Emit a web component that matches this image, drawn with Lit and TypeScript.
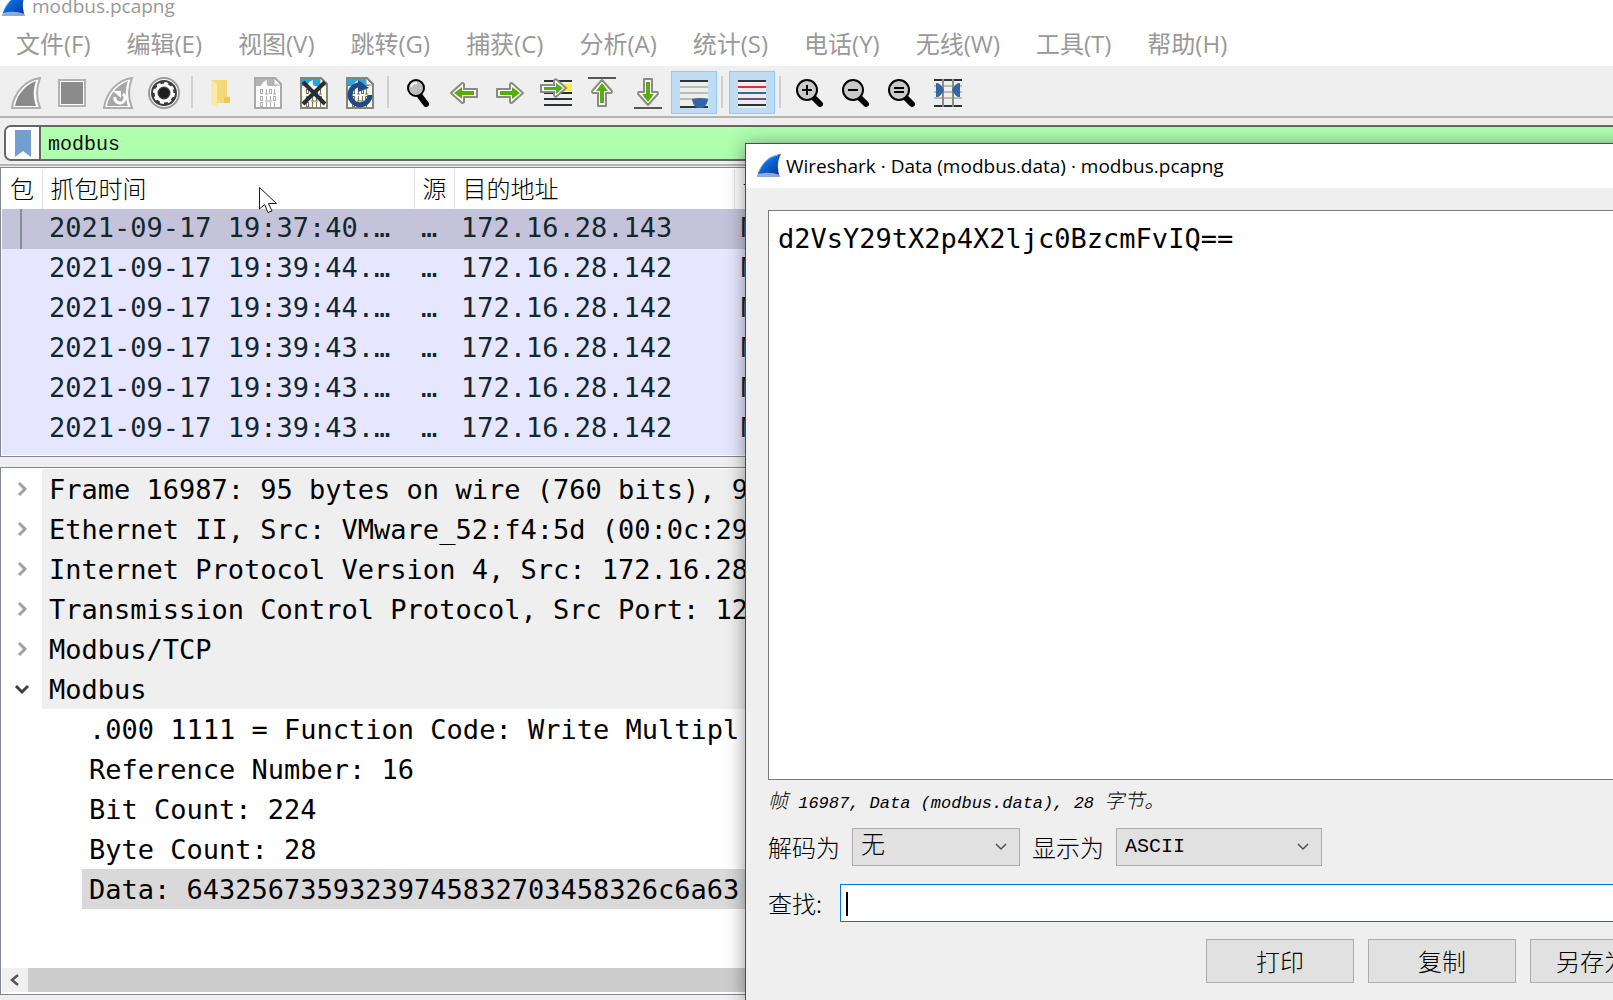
import { LitElement, html, svg, css } from "lit";
import { customElement, state } from "lit/decorators.js";
import { classMap } from "lit/directives/class-map.js";

const fin = (id: string) => svg`
  <defs>
    <linearGradient id=${id} x1="0" y1="0" x2="1" y2="1">
      <stop offset="0" stop-color="#2f9bf5"></stop>
      <stop offset=".5" stop-color="#0a5fd0"></stop>
      <stop offset="1" stop-color="#062f8c"></stop>
    </linearGradient>
  </defs>
  <path d="M0 23C3 11 11 1 24 0C20 7 20 16 23 23Z" fill="url(#${id})"></path>
  <path d="M1 20Q12 17 23 21V23H0Z" fill="#b9cbe8" opacity=".75"></path>
  <path d="M2 17C6 8 12 3 21 1" fill="none" stroke="#7cc4fb" stroke-width="1"></path>`;

const finOutline = svg`
  <path d="M2 31C4 16 15 3 30 1C26 11 26 21 30 31Z" fill="#fff" stroke="#adadad" stroke-width="2"></path>`;

const sheet = (top: string, edge: string, ink: string, paper: string) => svg`
  <path d="M3 1H23L29 7V31H3Z" fill=${paper} stroke=${edge} stroke-width="2"></path>
  <path d="M4 2H22L25 5V9H4Z" fill=${top}></path>
  <path d="M9 9C10 6 12 4 15 3C14 6 15 8 16 9Z" fill="#fff"></path>
  <path d="M22 1V8H29Z" fill="#fff" stroke=${edge}></path>
  <g fill="none" stroke=${ink} stroke-width="1">
    <rect x="8.500" y="12.500" width="2" height="4"></rect><path d="M14.500 12V17M22.500 12V17M13 17H16M21 17H24"></path><rect x="17.500" y="12.500" width="2" height="4"></rect>
    <rect x="8.500" y="19.500" width="2" height="4"></rect><path d="M14.500 19V24M18.500 19V24M13 24H20"></path><rect x="21.500" y="19.500" width="2" height="4"></rect>
    <rect x="8.500" y="25.500" width="2" height="4"></rect><path d="M14.500 25V30M18.500 25V30M22.500 25V30"></path>
  </g>`;

const lens = (mark: unknown) => svg`
  <path d="M19 20L26 27" stroke="#000" stroke-width="6" stroke-linecap="round"></path>
  <circle cx="13" cy="13" r="10" fill="#c9c9c9" stroke="#000" stroke-width="2"></circle>
  <g stroke="#000" stroke-width="2">${mark}</g>`;

const arrow = (turn: number) => svg`
  <g transform="rotate(${turn} 16 16)">
    <path d="M3 12H16V7Q17 5 19 7L29 16L19 25Q17 27 16 25V20H3Z" fill="#fff" stroke="#8b8b85" stroke-width="2" stroke-linejoin="round"></path>
    <path d="M6 14H18V10L26 16L18 22V18H6Z" fill="#58ad0c"></path>
  </g>`;

const icons: Record<string, unknown> = {
  start: svg`${finOutline}<path d="M5 29C7 18 15 8 26 4C23 12 23 21 26 29Z" fill="#8b8b8b"></path>`,
  stop: svg`<rect x="3" y="3" width="26" height="26" fill="#fff" stroke="#b3b3b3" stroke-width="2"></rect><rect x="5" y="5" width="22" height="22" fill="#8c8c8c"></rect>`,
  restart: svg`${finOutline}<path d="M5 29C7 18 15 8 26 4C23 12 23 21 26 29Z" fill="#a8a8a8"></path>
    <path d="M13 20A5 5 0 1 0 21 17" fill="none" stroke="#fff" stroke-width="3"></path><path d="M11 14H19V21Z" fill="#fff"></path>`,
  options: svg`<circle cx="16" cy="16" r="15" fill="#fff" stroke="#9b9b9b" stroke-width="2"></circle><circle cx="16" cy="16" r="13" fill="#3b3b3b"></circle>
    <circle cx="16" cy="16" r="8" fill="none" stroke="#fff" stroke-width="3"></circle>
    <circle cx="16" cy="16" r="10" fill="none" stroke="#fff" stroke-width="2" stroke-dasharray="4 3.85"></circle><circle cx="16" cy="16" r="5" fill="#1c1c1c"></circle>`,
  open: svg`<path d="M5 3H21V19L24 20V26H8Z" fill="#f7d878"></path><path d="M5 3L11 7V30L5 27Z" fill="#fde9a5"></path><path d="M18 20H24V26H18Z" fill="#efc55a"></path>`,
  save: sheet("#b5b5b5", "#a9a9a9", "#b0b0b0", "#fcfcfc"),
  close: svg`${sheet("#2ba5e0", "#85857b", "#77776c", "#fffde8")}<path d="M5 5L27 27M27 5L5 27" stroke="#262f33" stroke-width="4"></path>`,
  reload: svg`${sheet("#2ba5e0", "#85857b", "#77776c", "#fffde8")}<path d="M18 8A10 10 0 1 0 26 18" fill="none" stroke="#204a87" stroke-width="5"></path><path d="M14 3L25 11L14 15Z" fill="#204a87"></path>`,
  find: svg`<path d="M18 19L24 27" stroke="#000" stroke-width="6" stroke-linecap="round"></path>
    <circle cx="14" cy="11" r="8" fill="#bdbdbd" stroke="#000" stroke-width="2"></circle><path d="M9 10Q10 6 15 6" fill="none" stroke="#fff" stroke-width="2"></path>`,
  back: arrow(180),
  forward: arrow(0),
  goto: svg`<path d="M4 4H32M4 16H32M4 22H32M4 28H32" stroke="#2e3436" stroke-width="2"></path><path d="M20 7H32V14H20Z" fill="#fce94f"></path>
    <path d="M1 8H14V4Q15 1 17 3L26 11L17 19Q15 21 14 18V15H1Z" fill="#fff" stroke="#8b8b85" stroke-width="2"></path><path d="M4 10H16V6L23 11L16 17V13H4Z" fill="#58ad0c"></path>`,
  first: svg`<path d="M2 1H30" stroke="#555753" stroke-width="2"></path>${arrow(270)}`,
  last: svg`<path d="M2 31H30" stroke="#555753" stroke-width="2"></path><g transform="translate(0 -1)">${arrow(90)}</g>`,
  autoscroll: svg`<rect x="2" y="3" width="28" height="28" fill="#eeeeec"></rect><path d="M2 4H30M2 30H30" stroke="#2e3436" stroke-width="2"></path>
    <path d="M2 10H30M2 16H30M2 22H30" stroke="#babdb6" stroke-width="2"></path><path d="M14 22Q22 20 30 22Q30 27 25 31H19Q14 27 14 22Z" fill="#3465a4"></path>`,
  colorize: svg`<rect x="2" y="3" width="28" height="28" fill="#eeeeec"></rect><path d="M2 4H30M2 28H30" stroke="#2e3436" stroke-width="2"></path>
    <path d="M2 10H30" stroke="#ef2929" stroke-width="2"></path><path d="M2 16H30" stroke="#3465a4" stroke-width="2"></path><path d="M2 22H30" stroke="#75507b" stroke-width="2"></path>`,
  zoomin: lens(svg`<path d="M8 13H18M13 8V18"></path>`),
  zoomout: lens(svg`<path d="M8 13H18"></path>`),
  zoomreset: lens(svg`<path d="M8 11H18M8 15H18"></path>`),
  resize: svg`<path d="M2 9H30M2 15H30M2 21H30" stroke="#babdb6" stroke-width="2"></path><path d="M2 3H30M2 29H30" stroke="#2e3436" stroke-width="2"></path>
    <path d="M11 2V30M21 2V30" stroke="#888a85" stroke-width="2"></path><path d="M4 6Q8 5 12 13Q8 21 4 20ZM28 6Q24 5 20 13Q24 21 28 20Z" fill="#3465a4"></path>`,
};

const toolGroups: { id: string; label: string; on?: boolean }[][] = [
  [
    { id: "start", label: "开始捕获" },
    { id: "stop", label: "停止捕获" },
    { id: "restart", label: "重新开始捕获" },
    { id: "options", label: "捕获选项" },
  ],
  [
    { id: "open", label: "打开" },
    { id: "save", label: "保存" },
    { id: "close", label: "关闭" },
    { id: "reload", label: "重新加载" },
  ],
  [
    { id: "find", label: "查找分组" },
    { id: "back", label: "后退" },
    { id: "forward", label: "前进" },
    { id: "goto", label: "转到分组" },
    { id: "first", label: "第一个分组" },
    { id: "last", label: "最后一个分组" },
    { id: "autoscroll", label: "自动滚动", on: true },
  ],
  [{ id: "colorize", label: "着色", on: true }],
  [
    { id: "zoomin", label: "放大" },
    { id: "zoomout", label: "缩小" },
    { id: "zoomreset", label: "原始大小" },
    { id: "resize", label: "调整列宽" },
  ],
];

const menus = ["文件(F)", "编辑(E)", "视图(V)", "跳转(G)", "捕获(C)", "分析(A)", "统计(S)", "电话(Y)", "无线(W)", "工具(T)", "帮助(H)"];

const packets = [
  ["2021-09-17 19:37:40.…", "172.16.28.143"],
  ["2021-09-17 19:39:44.…", "172.16.28.142"],
  ["2021-09-17 19:39:44.…", "172.16.28.142"],
  ["2021-09-17 19:39:43.…", "172.16.28.142"],
  ["2021-09-17 19:39:43.…", "172.16.28.142"],
  ["2021-09-17 19:39:43.…", "172.16.28.142"],
];

const layers = [
  "Frame 16987: 95 bytes on wire (760 bits), 9",
  "Ethernet II, Src: VMware_52:f4:5d (00:0c:29",
  "Internet Protocol Version 4, Src: 172.16.28",
  "Transmission Control Protocol, Src Port: 12",
  "Modbus/TCP",
  "Modbus",
];

const fields = [
  ".000 1111 = Function Code: Write Multipl",
  "Reference Number: 16",
  "Bit Count: 224",
  "Byte Count: 28",
  "Data: 64325673593239745832703458326c6a63",
];

const shared = css`
  * { box-sizing: border-box; }
  button, input, select, textarea { font: inherit; color: inherit; margin: 0; border-radius: 0; outline: none; }
  svg { display: block; flex: none; }
`;

@customElement("ws-toolbar")
export class WsToolbar extends LitElement {
  static styles = [
    shared,
    css`
      :host { display: block; }
      .bar { display: flex; height: 48px; padding: 3px 3px 0; background: #efefef; }
      .group { display: flex; }
      .group + .group::before { content: ""; width: 2px; height: 32px; margin: 5px 6px 0 4px; background: #cfcfcf; }
      .tool { display: flex; justify-content: center; width: 46px; height: 43px; padding: 5px 0 0; border: 1px solid transparent; background: none; }
      .on { background: #c0dcf3; border-color: #90c8f6; }
    `,
  ];
  render() {
    return html`<div class="bar" role="toolbar">
      ${toolGroups.map(
        (g) => html`<div class="group">
          ${g.map(
            (t) => html`<button class=${classMap({ tool: true, on: !!t.on })} aria-label=${t.label}>
              <svg width="32" height="32" viewBox="0 0 32 32" aria-hidden="true">${icons[t.id]}</svg>
            </button>`
          )}
        </div>`
      )}
    </div>`;
  }
}

@customElement("ws-packets")
export class WsPackets extends LitElement {
  static styles = [
    shared,
    css`
      :host { display: block; height: 290px; border: 1px solid #828790; padding: 1px; overflow: hidden; background: #fff; }
      .fill { height: 100%; background: #e6e6ff; }
      .list { width: 100%; border-collapse: collapse; table-layout: fixed; }
      .no, .src { width: 40px; }
      .time { width: 372px; }
      .dst { width: 280px; }
      th { height: 40px; padding: 6px 0 0 8px; text-align: left; font: 300 24px/34px "Liberation Mono", "Noto Sans CJK SC", monospace; background: #fff; border-right: 1px solid #e2e2e2; white-space: nowrap; }
      td { height: 40px; padding: 0 0 2px 7px; font: 27px/38px "DejaVu Sans Mono", monospace; color: #12272e; white-space: nowrap; overflow: hidden; }
      .selected td { background: #c5c3d9; }
      .mark { padding: 0 0 0 18px; }
      .stem { display: block; width: 2px; height: 40px; background: #858f98; }
    `,
  ];
  render() {
    return html`<div class="fill">
      <table class="list">
        <colgroup><col class="no" /><col class="time" /><col class="src" /><col class="dst" /><col /></colgroup>
        <thead>
          <tr><th>包</th><th>抓包时间</th><th>源</th><th>目的地址</th><th>协议</th></tr>
        </thead>
        <tbody>
          ${packets.map(
            ([time, dst], i) => html`<tr class=${classMap({ selected: i === 0 })}>
              <td class="mark">${i === 0 ? html`<span class="stem"></span>` : ""}</td>
              <td>${time}</td><td>…</td><td>${dst}</td><td>Modbus/TCP</td>
            </tr>`
          )}
        </tbody>
      </table>
    </div>`;
  }
}

@customElement("ws-details")
export class WsDetails extends LitElement {
  static styles = [
    shared,
    css`
      :host { display: flex; flex-direction: column; border: 1px solid #828790; padding: 1px; overflow: hidden; background: #fff; font: 27px/39px "DejaVu Sans Mono", monospace; color: #000; }
      .tree { flex: 1; overflow: hidden; white-space: nowrap; }
      .layer { display: flex; height: 40px; }
      .toggle { display: flex; align-items: center; justify-content: center; width: 40px; padding: 0; border: 0; background: none; color: #a0a0a0; }
      .open { color: #404040; }
      .label { flex: 1; padding: 1px 0 0 7px; background: #efefef; }
      .field { height: 40px; margin-left: 80px; padding: 1px 0 0 7px; }
      .selected { background: #d9d9d9; }
      .scroll { display: flex; height: 24px; margin-bottom: 1px; background: #cdcdcd; }
      .step { display: flex; align-items: center; justify-content: center; width: 26px; padding: 0; border: 0; background: #f0f0f0; color: #555; }
    `,
  ];
  render() {
    return html`<div class="tree" role="tree">
        ${layers.map((text, i) => {
          const open = i === layers.length - 1;
          return html`<div class="layer" role="treeitem">
            <button class=${classMap({ toggle: true, open })} aria-label=${text}>
              <svg width="16" height="16" viewBox="0 0 16 16" fill="none" stroke="currentColor" stroke-width="3">
                <path d=${open ? "M2 5L8 11L14 5" : "M5 2L11 8L5 14"}></path>
              </svg>
            </button>
            <span class="label">${text}</span>
          </div>`;
        })}
        ${fields.map((text, i) => html`<div class=${classMap({ field: true, selected: i === fields.length - 1 })} role="treeitem">${text}</div>`)}
      </div>
      <div class="scroll">
        <button class="step" aria-label="向左滚动">
          <svg width="12" height="12" viewBox="0 0 12 12" fill="none" stroke="currentColor" stroke-width="2.5"><path d="M9 1L3 6L9 11"></path></svg>
        </button>
      </div>`;
  }
}

@customElement("ws-dialog")
export class WsDialog extends LitElement {
  @state() private data = "d2VsY29tX2p4X2ljc0BzcmFvIQ==";
  static styles = [
    shared,
    css`
      :host { display: flex; flex-direction: column; border: 1px solid #4c4c4c; background: #efefef; box-shadow: 0 2px 18px rgba(0, 0, 0, 0.42); font: 300 24px/36px "Liberation Mono", "Noto Sans CJK SC", monospace; color: #000; }
      .title { display: flex; align-items: center; gap: 5px; height: 44px; padding: 0 11px; background: #fff; font: 19px/42px "Open Sans", "Noto Sans", sans-serif; white-space: nowrap; }
      .body { flex: 1; display: flex; flex-direction: column; padding: 22px 22px 17px; }
      .data { flex: 1; width: 100%; padding: 10px 9px; border: 1px solid #7a7a7a; background: #fff; resize: none; font: 27px/36px "DejaVu Sans Mono", monospace; }
      .info { margin: 0; height: 48px; font: italic 300 17px/46px "Liberation Mono", "Noto Sans CJK SC", monospace; white-space: pre; }
      .han { font-size: 20px; }
      .row { display: flex; align-items: center; gap: 12px; height: 38px; white-space: nowrap; }
      .name { min-width: 60px; line-height: 34px; font-family: "Noto Sans CJK SC", sans-serif; }
      .find { margin: 18px 0 17px; }
      .pick { display: grid; grid-template-rows: 38px; width: 168px; }
      .wide { width: 206px; }
      .pick > * { grid-area: 1 / 1; }
      .pick svg { justify-self: end; align-self: center; margin-right: 12px; pointer-events: none; }
      .select { appearance: none; width: 100%; height: 38px; padding: 0 8px; border: 1px solid #adadad; background: #e1e1e1; }
      .latin { font-size: 20px; }
      .box { position: relative; flex: 1; display: flex; height: 38px; }
      .input { flex: 1; padding: 0 6px; border: 1px solid #0078d7; background: #fff; }
      .caret { position: absolute; left: 6px; top: 8px; width: 2px; height: 24px; background: #000; }
      .actions { display: flex; justify-content: flex-end; gap: 14px; }
      .action { width: 148px; height: 44px; padding: 0; border: 1px solid #adadad; background: #e1e1e1; font-family: "Noto Sans CJK SC", sans-serif; }
    `,
  ];
  private chevron() {
    return html`<svg width="14" height="14" viewBox="0 0 14 14" fill="none" stroke="#505050" stroke-width="1.5"><path d="M2 4L7 9L12 4"></path></svg>`;
  }
  render() {
    return html`<div class="title">
        <svg width="24" height="24" viewBox="0 0 24 24" aria-hidden="true">${fin("dlg")}</svg>
        <span>Wireshark · Data (modbus.data) · modbus.pcapng</span>
      </div>
      <div class="body">
        <textarea class="data" readonly aria-label="Data" .value=${this.data}></textarea>
        <p class="info"><span class="han">帧</span> 16987, Data (modbus.data), 28 <span class="han">字节。</span></p>
        <div class="row">
          <label class="name" for="decode">解码为</label>
          <span class="pick"><select id="decode" class="select"><option>无</option></select>${this.chevron()}</span>
          <label class="name" for="show">显示为</label>
          <span class="pick wide"><select id="show" class="select latin"><option>ASCII</option></select>${this.chevron()}</span>
        </div>
        <div class="row find">
          <label class="name" for="find">查找:</label>
          <span class="box"><input id="find" class="input" type="text" /><span class="caret"></span></span>
        </div>
        <div class="actions">
          <button class="action">打印</button><button class="action">复制</button><button class="action">另存为…</button>
        </div>
      </div>`;
  }
}

@customElement("app-root")
export class AppRoot extends LitElement {
  static styles = [
    shared,
    css`
      :host { display: flex; flex-direction: column; position: relative; height: 100vh; overflow: hidden; background: #efefef; font-family: "Noto Sans CJK SC", sans-serif; }
      .title { display: flex; gap: 6px; height: 20px; padding-left: 2px; background: #fff; color: #999; font: 19px/20px "Open Sans", sans-serif; align-items: flex-end; overflow: hidden; }
      .name { height: 24px; }
      .mark { align-self: flex-end; margin-bottom: 3px; }
      .menu { display: flex; align-items: flex-start; gap: 36px; height: 48px; padding-left: 16px; background: #fff; border-bottom: 2px solid #f0f0f0; }
      .entry { padding: 0; border: 0; background: none; color: #999; font: 24px/48px "Open Sans", "Noto Sans CJK SC", sans-serif; white-space: nowrap; }
      .rule { height: 2px; background: #b5b5b5; }
      .filter { display: flex; height: 36px; margin: 7px -8px 3px 4px; border: 2px solid #666; border-radius: 7px; background: #afffaf; overflow: hidden; }
      .bookmark { display: flex; justify-content: center; width: 35px; padding: 2px 0 0; border: 0; border-right: 2px solid #666; background: #fff; }
      .expr { flex: 1; padding: 4px 7px 0; border: 0; background: none; color: #111; font: 20px/28px "Liberation Mono", monospace; }
      .packets { margin-top: 1px; }
      .details { flex: 1; margin: 10px 0 5px; }
      .dialog { position: absolute; left: 745px; right: -88px; top: 143px; bottom: -1px; }
      .cursor { position: absolute; left: 258px; top: 186px; }
    `,
  ];
  render() {
    return html`
      <div class="title">
        <svg class="mark" width="24" height="24" viewBox="0 0 24 24" aria-hidden="true">${fin("main")}</svg>
        <span class="name">modbus.pcapng</span>
      </div>
      <nav class="menu">${menus.map((m) => html`<button class="entry">${m}</button>`)}</nav>
      <ws-toolbar></ws-toolbar>
      <div class="rule"></div>
      <div class="filter">
        <button class="bookmark" aria-label="书签">
          <svg width="16" height="29" viewBox="0 0 16 29"><path d="M0 1H16V28L8 22L0 28Z" fill="#729fcf"></path></svg>
        </button>
        <input class="expr" type="text" aria-label="显示过滤器" .value=${"modbus"} />
      </div>
      <div class="rule"></div>
      <ws-packets class="packets"></ws-packets>
      <ws-details class="details"></ws-details>
      <ws-dialog class="dialog" role="dialog"></ws-dialog>
      <svg class="cursor" width="20" height="28" viewBox="0 0 20 28" aria-hidden="true">
        <path d="M1.500 1.500V23L6.500 18.500L10 26.500L14 25L10.500 17.500H18.500Z" fill="#fff" stroke="#1b1b2b" stroke-width="1"></path>
      </svg>`;
  }
}
